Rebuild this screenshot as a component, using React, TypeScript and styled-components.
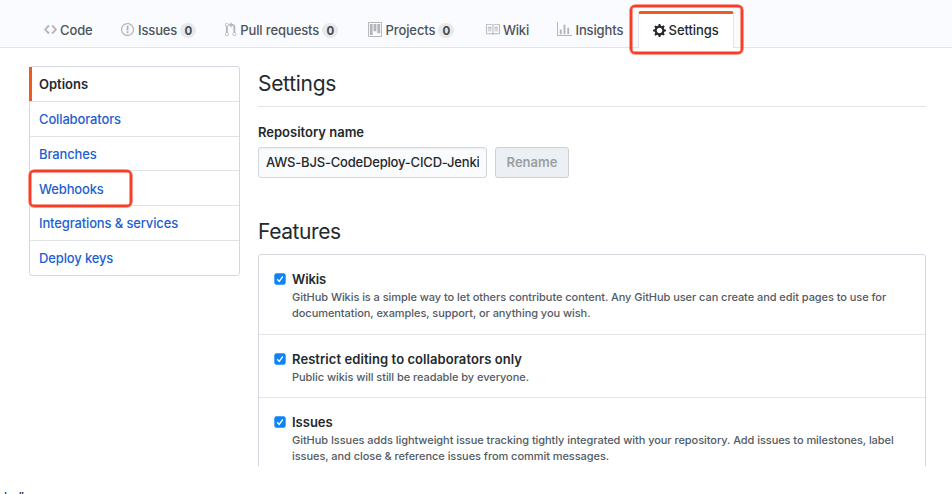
import React from "react";
import styled, { createGlobalStyle, css } from "styled-components";

const GlobalStyle = createGlobalStyle`
  * { box-sizing: border-box; }
  body {
    margin: 0;
    background: #fff;
    color: #24292e;
    font-family: Inter, "Liberation Sans", sans-serif;
    font-size: 13px;
    font-weight: 450;
    line-height: 20px;
    overflow: hidden;
  }
  h1, h2, p { margin: 0; font-weight: 400; }
`;

const Page = styled.div`
  width: 952px;
  height: 494px;
  overflow: hidden;
`;

const TabBar = styled.nav`
  display: flex;
  align-items: flex-end;
  height: 48px;
  padding-left: 44px;
  background: #fafbfe;
  border-bottom: 1px solid #e1e4e8;
`;

const Tab = styled.a<{ $width: number; $active?: boolean; $spacing: number }>`
  position: relative;
  display: flex;
  align-items: center;
  flex: none;
  width: ${(p) => p.$width}px;
  height: 37px;
  padding-top: 2px;
  color: #4c535a;
  letter-spacing: ${(p) => p.$spacing}px;
  white-space: nowrap;

  ${(p) =>
    p.$active &&
    css`
      margin-bottom: -1px;
      padding: 0 0 2px 13.5px;
      color: #24292e;
      background: #fff;
      border: solid #e1e4e8;
      border-width: 3px 1px 0;
      border-top-color: #ec5b24;
      border-radius: 3px 3px 0 0;
    `}
`;

const TabIcon = styled.svg<{ $active?: boolean; $gap: number }>`
  flex: none;
  margin-right: ${(p) => p.$gap}px;
  fill: ${(p) => (p.$active ? "#24292e" : "#b3b6b9")};
`;

const Counter = styled.span`
  margin: 1px 0 0 3px;
  width: 16px;
  height: 15px;
  border-radius: 8px;
  background: #e7e9ec;
  color: #444b52;
  font-size: 11.5px;
  font-weight: 700;
  line-height: 16px;
  text-align: center;
`;

const Highlight = styled.span<{ $top: number; $left: number; $width: number; $height: number }>`
  position: absolute;
  top: ${(p) => p.$top}px;
  left: ${(p) => p.$left}px;
  width: ${(p) => p.$width}px;
  height: ${(p) => p.$height}px;
  border: 2px solid #fb3c25;
  box-shadow: 0 0 0 0.5px #fb3c25, inset 0 0 0 0.5px #fb3c25;
  border-radius: 5px;
  z-index: 1;
`;

const Columns = styled.div`
  display: flex;
  align-items: flex-start;
  height: 418px;
  padding: 18px 26px 0 29px;
  gap: 18px;
  overflow: hidden;
`;

const Menu = styled.nav`
  flex: none;
  width: 211px;
  border: 1px solid #d3d8de;
  border-radius: 3px;
`;

const MenuItem = styled.a<{ $active?: boolean }>`
  position: relative;
  display: block;
  height: 34.75px;
  padding: 7.3px 0 0 9px;
  color: #1d5fd0;
  letter-spacing: -0.14px;
  border-bottom: 1px solid #dfe3e8;

  &:last-child {
    height: 34px;
    border-bottom: 0;
  }

  ${(p) =>
    p.$active &&
    css`
      padding-top: 7px;
      color: #24292e;
      font-weight: 600;
      letter-spacing: 0;

      &::before {
        content: "";
        position: absolute;
        top: 0;
        bottom: 0;
        left: -1px;
        width: 2.5px;
        background: #ec5b24;
      }
    `}
`;

const Content = styled.main`
  flex: 1;
  min-width: 0;
`;

const Title = styled.h1`
  height: 40.5px;
  padding-top: 3px;
  font-size: 21px;
  line-height: 30px;
  letter-spacing: -0.3px;
  border-bottom: 1px solid #e1e4e8;
`;

const Label = styled.label`
  display: block;
  margin-top: 15px;
  font-weight: 600;
`;

const RenameRow = styled.div`
  display: flex;
  gap: 8px;
  margin-top: 5px;
`;

const NameField = styled.div`
  width: 229px;
  height: 31px;
  padding: 0 7px 0 7px;
  border: 1px solid #d3d8de;
  border-radius: 3px;
  background: #fafbfd;
  box-shadow: inset 0 1px 2px rgba(27, 31, 35, 0.06);
`;

const NameText = styled.div`
  overflow: hidden;
  white-space: nowrap;
  line-height: 29px;
  letter-spacing: -0.19px;
`;

const RenameButton = styled.button`
  width: 74px;
  height: 31px;
  padding: 0;
  border: 1px solid #ccd1d5;
  border-radius: 3px;
  background: #ecf0f4;
  color: #9b9fa3;
  font: 600 13px Inter, sans-serif;
`;

const SectionTitle = styled.h2`
  margin-top: 39px;
  font-size: 21px;
  line-height: 30px;
  letter-spacing: -0.42px;
`;

const FeatureList = styled.div`
  margin-top: 7px;
  border: 1px solid #d5d9df;
  border-radius: 3px;
`;

const Feature = styled.div<{ $height: number }>`
  display: flex;
  gap: 6.5px;
  height: ${(p) => p.$height}px;
  padding: 14.5px 0 0 14.5px;
  border-bottom: 1px solid #e1e4e8;
`;

const Check = styled.svg`
  flex: none;
  margin-top: 4px;
`;

const FeatureName = styled.div<{ $spacing: number }>`
  height: 19.5px;
  font-size: 13px;
  font-weight: 600;
  letter-spacing: ${(p) => p.$spacing}px;
`;

const Description = styled.p`
  color: #535b64;
  font-size: 11px;
  font-weight: 450;
  line-height: 16.5px;
  letter-spacing: -0.055px;
  white-space: nowrap;
`;

const Caption = styled.p`
  margin-top: 22px;
  padding-left: 4px;
  color: #222;
  font-size: 13px;
  line-height: 18px;
  word-spacing: 3px;
`;

const tabs = [
  { label: "Code", width: 77, w: 14, gap: 3, spacing: -0.15, path: "M9.5 3L8 4.5 11.5 8 8 11.5 9.5 13 14 8 9.5 3zm-5 0L0 8l4.5 5L6 11.5 2.5 8 6 4.5 4.5 3z" },
  { label: "Issues", width: 104, w: 14, gap: 4, spacing: -0.15, count: 0, path: "M7 2.3c3.14 0 5.7 2.56 5.7 5.7s-2.56 5.7-5.7 5.7A5.71 5.71 0 0 1 1.3 8c0-3.14 2.56-5.7 5.7-5.7zM7 1C3.14 1 0 4.14 0 8s3.14 7 7 7 7-3.14 7-7-3.14-7-7-7zm1 3H6v5h2V4zm0 6H6v2h2v-2z" },
  { label: "Pull requests", width: 143, w: 12, gap: 4, spacing: -0.11, count: 0, path: "M11 11.28V5c-.03-.78-.34-1.47-.94-2.06C9.46 2.35 8.78 2.03 8 2H7V0L4 3l3 3V4h1c.27.02.48.11.69.31.21.2.3.42.31.69v6.28A1.993 1.993 0 0 0 10 15a1.993 1.993 0 0 0 1-3.72zm-1 2.92c-.66 0-1.2-.55-1.2-1.2 0-.65.55-1.2 1.2-1.2.65 0 1.2.55 1.2 1.2 0 .65-.55 1.2-1.2 1.2zM4 3c0-1.11-.89-2-2-2a1.993 1.993 0 0 0-1 3.72v6.56A1.993 1.993 0 0 0 2 15a1.993 1.993 0 0 0 1-3.72V4.72c.59-.34 1-.98 1-1.72zm-.8 10c0 .66-.55 1.2-1.2 1.2-.65 0-1.2-.55-1.2-1.2 0-.65.55-1.2 1.2-1.2.65 0 1.2.55 1.2 1.2zM2 4.2C1.34 4.2.8 3.65.8 3c0-.65.55-1.2 1.2-1.2.65 0 1.2.55 1.2 1.2 0 .65-.55 1.2-1.2 1.2z" },
  { label: "Projects", width: 117, w: 15, gap: 3.5, spacing: -0.1, count: 0, path: "M10 12h3V2h-3v10zm-4-2h3V2H6v8zm-4 4h3V2H2v12zm-1 1h13V1H1v14zM14 0H1a1 1 0 0 0-1 1v14a1 1 0 0 0 1 1h13a1 1 0 0 0 1-1V1a1 1 0 0 0-1-1z" },
  { label: "Wiki", width: 72, w: 16, gap: 3, spacing: -0.2, path: "M3 5h4v1H3V5zm0 3h4V7H3v1zm0 2h4V9H3v1zm11-5h-4v1h4V5zm0 2h-4v1h4V7zm0 2h-4v1h4V9zm2-6v9c0 .55-.45 1-1 1H9.5l-1 1-1-1H2c-.55 0-1-.45-1-1V3c0-.55.45-1 1-1h5.5l1 1 1-1H15c.55 0 1 .45 1 1zm-8 .5L7.5 3H2v9h6V3.5zm7-.5H9.5l-.5.5V12h6V3z" },
  { label: "Insights", width: 81, w: 16, gap: 3.5, spacing: -0.12, path: "M16 14v1H0V0h1v14h15zM5 13H3V8h2v5zm4 0H7V3h2v10zm4 0h-2V6h2v7z" },
  { label: "Settings", width: 96, w: 14, gap: 3, spacing: -0.07, active: true, path: "M14 8.77v-1.6l-1.94-.64-.45-1.09.88-1.84-1.13-1.13-1.81.91-1.09-.45-.69-1.92h-1.6l-.63 1.94-1.11.45-1.84-.88-1.13 1.13.91 1.81-.45 1.09L0 7.23v1.59l1.94.64.45 1.09-.88 1.84 1.13 1.13 1.81-.91 1.09.45.69 1.92h1.59l.63-1.94 1.11-.45 1.84.88 1.13-1.13-.92-1.81.47-1.09L14 8.75v.02zM7 11c-1.66 0-3-1.34-3-3s1.34-3 3-3 3 1.34 3 3-1.34 3-3 3z" },
];

const menu = ["Options", "Collaborators", "Branches", "Webhooks", "Integrations & services", "Deploy keys"];

const features = [
  {
    name: "Wikis",
    height: 80,
    spacing: -0.1,
    lines: [
      "GitHub Wikis is a simple way to let others contribute content. Any GitHub user can create and edit pages to use for",
      "documentation, examples, support, or anything you wish.",
    ],
  },
  { name: "Restrict editing to collaborators only", height: 63, spacing: 0.07, lines: ["Public wikis will still be readable by everyone."] },
  {
    name: "Issues",
    height: 90,
    spacing: 0,
    lines: [
      "GitHub Issues adds lightweight issue tracking tightly integrated with your repository. Add issues to milestones, label",
      "issues, and close & reference issues from commit messages.",
    ],
  },
];

export default function App() {
  return (
    <Page>
      <GlobalStyle />
      <TabBar>
        {tabs.map((t) => (
          <Tab key={t.label} $width={t.width} $active={t.active} $spacing={t.spacing}>
            <TabIcon $active={t.active} $gap={t.gap} width={t.w * 0.935} height={15} viewBox={`0 0 ${t.w} 16`}>
              <path fillRule="evenodd" d={t.path} />
            </TabIcon>
            {t.label}
            {t.count !== undefined && <Counter>{t.count}</Counter>}
            {t.active && <Highlight $top={-9} $left={-9.5} $width={113} $height={49} />}
          </Tab>
        ))}
      </TabBar>
      <Columns>
        <Menu>
          {menu.map((m, i) => (
            <MenuItem key={m} $active={i === 0}>
              {m}
              {m === "Webhooks" && <Highlight $top={-1} $left={-1} $width={103} $height={36.5} />}
            </MenuItem>
          ))}
        </Menu>
        <Content>
          <Title>Settings</Title>
          <Label>Repository name</Label>
          <RenameRow>
            <NameField>
              <NameText>AWS-BJS-CodeDeploy-CICD-Jenkins</NameText>
            </NameField>
            <RenameButton>Rename</RenameButton>
          </RenameRow>
          <SectionTitle>Features</SectionTitle>
          <FeatureList>
            {features.map((f) => (
              <Feature key={f.name} $height={f.height}>
                <Check width="12" height="12" viewBox="0 0 12 12">
                  <rect x="0.3" y="0.3" width="11.4" height="11.4" rx="2.3" fill="#0d84f6" />
                  <path d="M3.2 6.3l2 2.2 3.6-5" fill="none" stroke="#fff" strokeWidth="1.3" />
                </Check>
                <div>
                  <FeatureName $spacing={f.spacing}>{f.name}</FeatureName>
                  {f.lines.map((line) => (
                    <Description key={line}>{line}</Description>
                  ))}
                </div>
              </Feature>
            ))}
          </FeatureList>
        </Content>
      </Columns>
      <Caption>h ”</Caption>
    </Page>
  );
}
